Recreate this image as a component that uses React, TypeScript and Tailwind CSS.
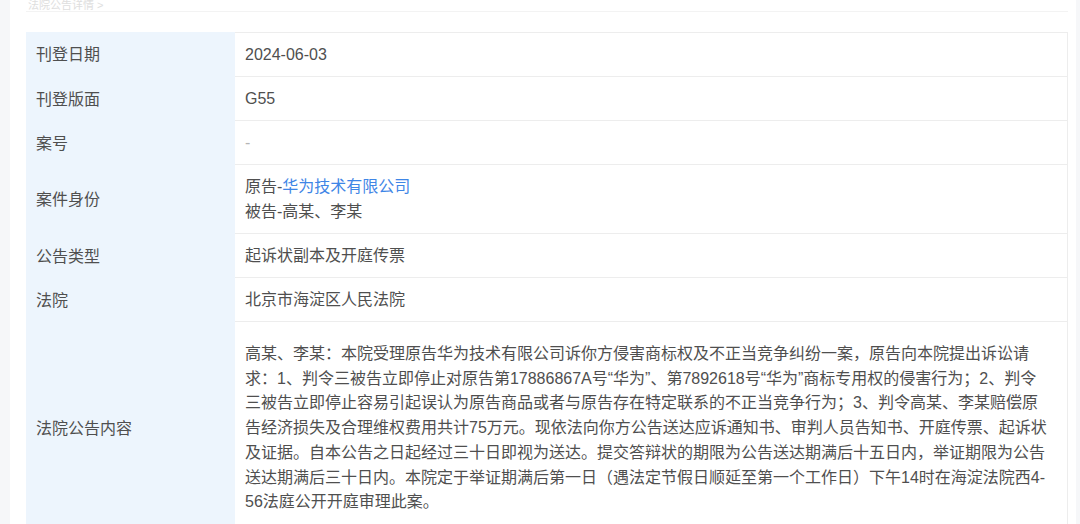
import React from "react";

const font = {
  fontFamily: '"Liberation Sans", "Noto Sans CJK SC", sans-serif',
};

const rows: { label: string; value: React.ReactNode }[] = [
  { label: "刊登日期", value: "2024-06-03" },
  { label: "刊登版面", value: "G55" },
  { label: "案号", value: <span className="text-[#b5b5b5]">-</span> },
  {
    label: "案件身份",
    value: (
      <>
        <div>
          原告-<span className="text-[#3f86e6]">华为技术有限公司</span>
        </div>
        <div>被告-高某、李某</div>
      </>
    ),
  },
  { label: "公告类型", value: "起诉状副本及开庭传票" },
  { label: "法院", value: "北京市海淀区人民法院" },
];

const content = [
  "高某、李某：本院受理原告华为技术有限公司诉你方侵害商标权及不正当竞争纠纷一案，原告向本院提出诉讼请",
  "求：1、判令三被告立即停止对原告第17886867A号“华为”、第7892618号“华为”商标专用权的侵害行为；2、判令",
  "三被告立即停止容易引起误认为原告商品或者与原告存在特定联系的不正当竞争行为；3、判令高某、李某赔偿原",
  "告经济损失及合理维权费用共计75万元。现依法向你方公告送达应诉通知书、审判人员告知书、开庭传票、起诉状",
  "及证据。自本公告之日起经过三十日即视为送达。提交答辩状的期限为公告送达期满后十五日内，举证期限为公告",
  "送达期满后三十日内。本院定于举证期满后第一日（遇法定节假日顺延至第一个工作日）下午14时在海淀法院西4-",
  "56法庭公开开庭审理此案。",
];

export default function App() {
  return (
    <div
      className="w-[1080px] h-[524px] overflow-hidden bg-[#f6f7f9]"
      style={font}
    >
      <div className="ml-[10px] w-[1066px] h-full bg-white pl-[16px] pr-[8px]">
        {/* faint title */}
        <div className="h-[12px] border-b border-[#f3f3f3] text-[11px] leading-[11px] text-[#dedede] pl-[2px]">
          法院公告详情 &gt;
        </div>
        <div className="mt-[20px] text-[16px] text-[#4f4f4f] leading-[25px]">
          {rows.map((row, i) => (
            <div key={row.label} className="flex">
              <div className="w-[209px] bg-[#edf5fd] pl-[10px] flex items-center">
                {row.label}
              </div>
              <div
                className={`flex-1 border-b border-r border-[#ededed] pl-[10px] py-[9px] ${
                  i === 0 ? "border-t" : ""
                }`}
              >
                {row.value}
              </div>
            </div>
          ))}
          <div className="flex">
            <div className="w-[209px] bg-[#edf5fd] pl-[10px] flex items-center">
              法院公告内容
            </div>
            <div className="flex-1 border-r border-[#ededed] pl-[10px] pt-[20px] pb-[20px] leading-[24.7px]">
              {content.map((line) => (
                <div key={line} className="whitespace-nowrap">
                  {line}
                </div>
              ))}
            </div>
          </div>
        </div>
      </div>
    </div>
  );
}
